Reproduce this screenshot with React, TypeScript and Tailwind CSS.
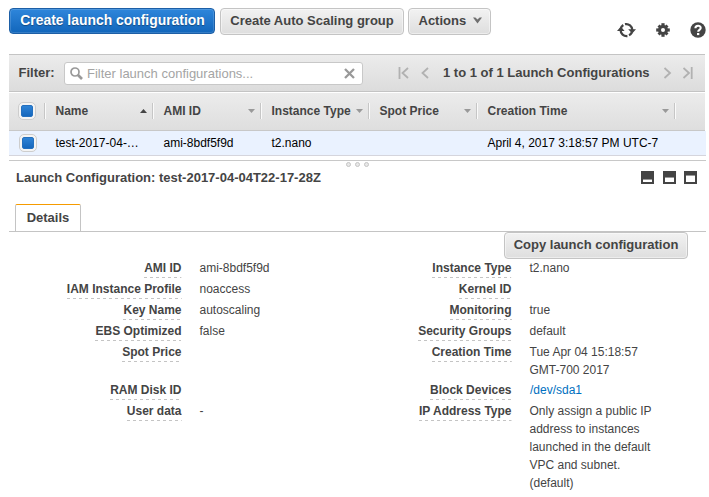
import React from 'react';

const grayButton =
  'flex items-center rounded-[4px] border border-[#c4c4c4] bg-linear-to-b from-[#f2f2f2] to-[#dedede] font-bold text-[#444] shadow-[inset_0_0_0_1px_rgba(255,255,255,0.45)] whitespace-nowrap';

function Checkbox({ className }: { className: string }) {
  return (
    <div className={`flex size-[18px] shrink-0 items-center justify-center rounded-[5px] border border-[#cdcdcd] bg-[#f4f4f4] ${className}`}>
      <div className="size-3 rounded-[2px] border border-[#2470bf] bg-linear-to-b from-[#2e83d6] to-[#1567bd]" />
    </div>
  );
}

function HeaderCell({ label, width, sort }: { label: string; width: string; sort?: 'up' | 'down' }) {
  return (
    <div className={`flex h-4 items-center border-l border-[#c6c6c6] shadow-[inset_1px_0_0_#fafafa] ${width}`}>
      <span className="grow pl-[10.5px] whitespace-nowrap">{label}</span>
      <svg className="mr-[5px] shrink-0" width="7" height="4" viewBox="0 0 7 4">
        {sort === 'up' ? <path d="M0 4L3.5 0L7 4Z" fill="#444" /> : <path d="M0 0H7L3.5 4Z" fill="#999" />}
      </svg>
    </div>
  );
}

function Field({ label, children, tall }: { label: string; children?: React.ReactNode; tall?: boolean }) {
  return (
    <div className={`flex items-start leading-[18px] ${tall ? 'h-[38px]' : 'min-h-[21px]'}`}>
      <div className="flex w-[172.5px] shrink-0 justify-end">
        <span className="relative font-bold whitespace-nowrap">
          {label}
          <svg className="absolute top-[18px] left-0 h-px w-full">
            <line x1="0" x2="100%" y1="0.5" y2="0.5" stroke="#c4c4c4" strokeDasharray="3 3" />
          </svg>
        </span>
      </div>
      <div className="ml-[18px] w-[128px]">{children}</div>
    </div>
  );
}

function PaneIcon({ top }: { top: number }) {
  return (
    <svg width="13" height="13" viewBox="0 0 13 13">
      <rect width="13" height="13" fill="#444" />
      <rect x="2" y={top} width="9" height={11 - top} fill="#fff" />
      <rect x="2" y={top - 1} width="9" height="1" fill="#999" />
    </svg>
  );
}

export default function App() {
  return (
    <div className="h-[497px] w-[709px] overflow-hidden bg-white pl-[9px] font-['Liberation_Sans',Arial,sans-serif] text-[12px] text-[#444]">
      <div className="flex h-[54px] items-start pt-2 text-[13px]">
        <button className="flex h-[26px] w-[206px] items-center justify-center rounded-[4px] border border-[#1d5fa6] bg-linear-to-b from-[#2e86db] to-[#1166bb] pb-px pl-px text-[13.9px] font-bold whitespace-nowrap text-white shadow-[inset_0_0_0_1px_rgba(255,255,255,0.15)] [text-shadow:0_1px_1px_#134a80]">
          Create launch configuration
        </button>
        <button className={`${grayButton} ml-[5px] h-[27px] w-[184px] justify-center pb-[2px]`}>Create Auto Scaling group</button>
        <button className={`${grayButton} ml-1 h-[27px] w-[83px] pb-[2px] pl-[9.5px]`}>
          Actions
          <svg className="ml-[6.5px]" width="9" height="7" viewBox="0 0 9 7">
            <path d="M0 .5H2.4L4.5 2.5L6.6 .5H9L4.5 6.5Z" fill="#707070" />
          </svg>
        </button>
        <div className="mt-[13px] ml-[126px] flex items-center">
          <svg width="19" height="16" viewBox="0 0 19 16" fill="none" stroke="#444" strokeWidth="2.3">
            <path d="M3.6 7.5A6 6 0 0 1 6.3 3M8 2.2A6 6 0 0 1 15.3 8" />
            <path d="M14.9 10.3A6 6 0 0 1 12 13.3M3.6 8A6 6 0 0 0 10.4 14" />
            <path d="M0 9L3.8 4.6L7.6 9ZM11.2 7.2H19L15.2 11.6Z" fill="#444" stroke="none" />
          </svg>
          <svg className="mt-px ml-5" width="14" height="14" viewBox="0 0 14 14">
            <g fill="#444">
              <circle cx="7" cy="7" r="4.9" />
              <rect x="5.4" y="0.2" width="3.2" height="13.6" />
              <rect x="0.2" y="5.4" width="13.6" height="3.2" />
              <rect x="5.5" y="0.7" width="3" height="12.6" transform="rotate(45 7 7)" />
              <rect x="5.5" y="0.7" width="3" height="12.6" transform="rotate(-45 7 7)" />
            </g>
            <circle cx="7" cy="7" r="2" fill="#fff" />
          </svg>
          <svg className="mt-px ml-[20px]" width="16" height="16" viewBox="0 0 16 16">
            <circle cx="8" cy="8" r="7.7" fill="#444" />
            <path d="M5.4 6.3C5.4 2.9 10.7 2.9 10.7 6C10.7 7.8 8.2 7.8 8.2 9.7" fill="none" stroke="#fff" strokeWidth="2.1" />
            <rect x="7" y="11" width="2.3" height="2.1" fill="#fff" />
          </svg>
        </div>
      </div>

      <div className="flex h-[38px] w-[696px] items-center border-y border-[#c4c4c4] bg-linear-to-b from-[#ececec] to-[#dcdcdc] text-[13px]">
        <span className="w-[55px] pl-[9.5px] font-bold">Filter:</span>
        <div className="flex h-[23px] w-[299px] items-center rounded-[3px] border border-[#c8c8c8] bg-white pr-[7px] pl-[5px] text-[#a4a4a4]">
          <svg width="13" height="13" viewBox="0 0 13 13" fill="none" stroke="#999">
            <circle cx="5" cy="5" r="4" strokeWidth="1.7" />
            <path d="M8 8L12 12" strokeWidth="2.7" />
          </svg>
          <span className="mt-px ml-1 grow">Filter launch configurations...</span>
          <svg width="11" height="11" viewBox="0 0 11 11" stroke="#999" strokeWidth="2.3">
            <path d="M1 1L10 10M10 1L1 10" />
          </svg>
        </div>
        <svg className="ml-[35px]" width="32" height="12" viewBox="0 0 32 12" fill="none" stroke="#b1b1b1" strokeWidth="1.8">
          <path d="M1.5 0V12M10 1L4.5 6L10 11M30 1L24.5 6L30 11" />
        </svg>
        <span className="ml-[13px] w-[210px] font-bold whitespace-nowrap">1 to 1 of 1 Launch Configurations</span>
        <svg className="ml-[10px]" width="30" height="12" viewBox="0 0 30 12" fill="none" stroke="#b1b1b1" strokeWidth="1.8">
          <path d="M1.5 1L7 6L1.5 11M20.5 1L26 6L20.5 11M28.7 0V12" />
        </svg>
      </div>

      <div className="mt-px flex h-[38px] w-[696px] items-center border-b border-[#c8c8c8] bg-linear-to-b from-[#ececec] to-[#dedede] pb-px font-bold">
        <Checkbox className="ml-[9px] mr-2" />
        <HeaderCell label="Name" width="w-[108px]" sort="up" />
        <HeaderCell label="AMI ID" width="w-[108px]" />
        <HeaderCell label="Instance Type" width="w-[108px]" />
        <HeaderCell label="Spot Price" width="w-[108px]" />
        <HeaderCell label="Creation Time" width="w-[198px]" />
        <div className="h-4 w-2 border-l border-[#c6c6c6] shadow-[inset_1px_0_0_#fafafa]" />
      </div>
      <div className="flex h-[25px] w-[697px] items-center border-b border-[#d5d5dd] bg-[#eaf2ff] text-black">
        <Checkbox className="ml-[10px] mr-[18.5px]" />
        <span className="w-[108px]">test-2017-04-…</span>
        <span className="w-[108px]">ami-8bdf5f9d</span>
        <span className="w-[216px]">t2.nano</span>
        <span>April 4, 2017 3:18:57 PM UTC-7</span>
      </div>

      <div className="mt-1 h-[44px] w-[697px] border-t border-[#c8c8c8]">
        <div className="flex h-[6px] items-end justify-center gap-1">
          {[0, 1, 2].map((dot) => (
            <div key={dot} className="size-[5px] rounded-full border border-[#c4c4c4] bg-[#e8e8e8]" />
          ))}
        </div>
        <div className="mt-px flex h-[19px] items-center justify-between pr-[9px] pl-[7px] text-[13px]">
          <span className="font-bold">Launch Configuration: test-2017-04-04T22-17-28Z</span>
          <div className="flex gap-[8.5px]">
            <PaneIcon top={9} />
            <PaneIcon top={7} />
            <PaneIcon top={5} />
          </div>
        </div>
      </div>

      <div className="flex h-7 w-[697px] border-b border-[#c4c4c4] pl-[6px]">
        <div className="flex h-[27px] w-[66px] items-center justify-center rounded-t-[2px] border-x border-t border-x-[#c4c4c4] border-t-[#f59b00] text-[13px] font-bold">
          Details
        </div>
      </div>
      <div className="flex h-[27px] justify-end pr-[21px] text-[13px]">
        <button className={`${grayButton} h-[27px] w-[184px] justify-center pb-[2px]`}>Copy launch configuration</button>
      </div>

      <div className="flex">
        <div className="w-[330px]">
          <Field label="AMI ID">ami-8bdf5f9d</Field>
          <Field label="IAM Instance Profile">noaccess</Field>
          <Field label="Key Name">autoscaling</Field>
          <Field label="EBS Optimized">false</Field>
          <Field label="Spot Price" tall />
          <Field label="RAM Disk ID" />
          <Field label="User data">-</Field>
        </div>
        <div>
          <Field label="Instance Type">t2.nano</Field>
          <Field label="Kernel ID" />
          <Field label="Monitoring">true</Field>
          <Field label="Security Groups">default</Field>
          <Field label="Creation Time" tall>Tue Apr 04 15:18:57 GMT-700 2017</Field>
          <Field label="Block Devices"><span className="pl-[0.5px] text-[#0070c0]">/dev/sda1</span></Field>
          <Field label="IP Address Type">Only assign a public IP address to instances launched in the default VPC and subnet. (default)</Field>
        </div>
      </div>
    </div>
  );
}
